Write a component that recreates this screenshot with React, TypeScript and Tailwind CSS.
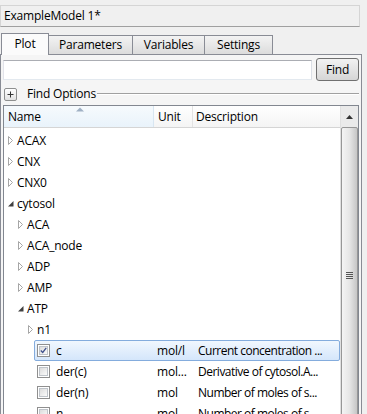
import React from 'react';

const FONT = { fontFamily: '"Open Sans", "Noto Sans", sans-serif' };

type Row = {
  label: string;
  level: number;
  kind: 'closed' | 'open' | 'leaf';
  checked?: boolean;
  unit?: string;
  desc?: string;
  selected?: boolean;
};

const ROWS: Row[] = [
  { label: 'ACAX', level: 0, kind: 'closed' },
  { label: 'CNX', level: 0, kind: 'closed' },
  { label: 'CNX0', level: 0, kind: 'closed' },
  { label: 'cytosol', level: 0, kind: 'open' },
  { label: 'ACA', level: 1, kind: 'closed' },
  { label: 'ACA_node', level: 1, kind: 'closed' },
  { label: 'ADP', level: 1, kind: 'closed' },
  { label: 'AMP', level: 1, kind: 'closed' },
  { label: 'ATP', level: 1, kind: 'open' },
  { label: 'n1', level: 2, kind: 'closed' },
  { label: 'c', level: 3, kind: 'leaf', checked: true, unit: 'mol/l', desc: 'Current concentration ...', selected: true },
  { label: 'der(c)', level: 3, kind: 'leaf', unit: 'mol...', desc: 'Derivative of cytosol.A...' },
  { label: 'der(n)', level: 3, kind: 'leaf', unit: 'mol', desc: 'Number of moles of s...' },
  { label: 'n', level: 3, kind: 'leaf', unit: 'mol', desc: 'Number of moles of s...' },
];

function ClosedArrow() {
  return (
    <svg width="6" height="10" viewBox="0 0 6 10" className="shrink-0">
      <path d="M0.5 0.5 L4.5 4.5 L0.5 8.5 Z" fill="white" stroke="#a6a6a6" strokeWidth="1" />
    </svg>
  );
}

function OpenArrow() {
  return (
    <svg width="6" height="10" viewBox="0 0 6 10" className="shrink-0">
      <path d="M5.5 2 L5.5 7.5 L0 7.5 Z" fill="#404040" />
    </svg>
  );
}

function CheckBox({ checked }: { checked?: boolean }) {
  return (
    <div className="w-[13px] h-[13px] border border-[#8f8f8f] bg-white p-[1px] shrink-0">
      <div className="w-full h-full border border-[#bfc4ca] bg-gradient-to-br from-[#dcdcdc] to-[#fbfbfb] flex items-center justify-center">
        {checked && (
          <svg width="9" height="9" viewBox="0 0 9 9">
            <path d="M1 4.5 L3.5 7 L8 1" fill="none" stroke="#3d4f8c" strokeWidth="1.6" />
          </svg>
        )}
      </div>
    </div>
  );
}

function TreeRow({ row }: { row: Row }) {
  const indent = row.level * 10;
  return (
    <div className="h-[21px] flex items-center relative">
      {row.selected && (
        <div
          className="absolute top-0 bottom-0 right-0 rounded-[2px] border border-[#84acdd] bg-gradient-to-b from-[#f1f7fe] to-[#d4e6fb]"
          style={{ left: 30 }}
        />
      )}
      <div className="w-[150px] shrink-0 flex items-center relative" style={{ paddingLeft: indent }}>
        {row.kind === 'leaf' ? (
          <>
            <div className="w-[3px]" />
            <CheckBox checked={row.checked} />
            <span className="ml-[6px] whitespace-nowrap">{row.label}</span>
          </>
        ) : (
          <>
            <div className="w-[4px]" />
            {row.kind === 'closed' ? <ClosedArrow /> : <OpenArrow />}
            <span className="ml-[3px] whitespace-nowrap">{row.label}</span>
          </>
        )}
      </div>
      <div className="w-[39px] shrink-0 pl-[3px] whitespace-nowrap relative">{row.unit}</div>
      <div className="flex-1 min-w-0 pl-[5px] whitespace-nowrap relative tracking-[-0.5px]">{row.desc}</div>
    </div>
  );
}

export default function App() {
  return (
    <div className="w-[367px] h-[414px] bg-[#f0f0f0] overflow-hidden text-[12px] text-black leading-none tracking-[-0.2px]" style={FONT}>
      {/* title */}
      <div className="mt-[5px] w-[360px] h-[22px] border border-[#d5d5d5] border-b-[#a0a0a0] flex items-center pl-[3px]">
        ExampleModel 1*
      </div>

      {/* tabs */}
      <div className="mt-[6px] flex items-end h-[22px] pl-[1px] relative z-10">
        <div className="w-[48px] h-[22px] border border-[#898c95] border-b-0 bg-[#fbfbfb] flex items-center justify-center pb-[1px]">
          Plot
        </div>
        <div className="w-[85px] h-[20px] -ml-[1px] border border-[#898c95] bg-gradient-to-b from-[#f3f3f3] to-[#dcdcdc] flex items-center justify-center">
          Parameters
        </div>
        <div className="w-[73px] h-[20px] -ml-[1px] border border-[#898c95] bg-gradient-to-b from-[#f3f3f3] to-[#dcdcdc] flex items-center justify-center">
          Variables
        </div>
        <div className="w-[69px] h-[20px] -ml-[1px] border border-[#898c95] bg-gradient-to-b from-[#f3f3f3] to-[#dcdcdc] flex items-center justify-center">
          Settings
        </div>
      </div>

      {/* panel */}
      <div className="-mt-[1px] w-[362px] h-[400px] border border-[#898c95] bg-[#f5f5f5] pt-[3px] px-[2px]">
        <div className="flex items-center gap-[4px]">
          <div className="w-[310px] h-[20px] border border-[#abadb3] border-l-[#e2e3ea] border-r-[#dbdfe6] border-b-[#e3e9ef] bg-white mt-[1px]" />
          <div className="w-[43px] h-[23px] rounded-[3px] border border-[#707070] bg-gradient-to-b from-[#f2f2f2] to-[#d6d6d6] flex items-center justify-center">
            Find
          </div>
        </div>

        <div className="h-[22px] mt-[2px] flex items-center">
          <div className="w-[13px] h-[13px] ml-[1px] border border-[#8e8f8f] rounded-[2px] bg-gradient-to-b from-white to-[#e2e2e2] flex items-center justify-center">
            <svg width="7" height="7" viewBox="0 0 7 7">
              <path d="M0.5 3.5 H6.5 M3.5 0.5 V6.5" stroke="#333" strokeWidth="1" />
            </svg>
          </div>
          <span className="ml-[10px] whitespace-nowrap">Find Options</span>
          <div className="flex-1 ml-[1px] h-[2px] border-t border-[#a0a0a0] border-b border-b-white" />
        </div>

        {/* tree */}
        <div className="h-[320px] border border-[#828790] bg-white flex">
          <div className="flex-1 min-w-0 flex flex-col">
            <div className="h-[24px] flex items-stretch border-b border-[#d5d5d5]">
              <div className="w-[150px] relative flex items-center pl-[4px] bg-gradient-to-b from-[#f6fafd] to-[#e9f3fb] border-r border-[#d8e6f2]">
                Name
                <svg className="absolute left-[72px] top-[1px]" width="8" height="5" viewBox="0 0 8 5">
                  <path d="M0 4.5 L4 0.5 L8 4.5 Z" fill="#9fb0c4" />
                </svg>
              </div>
              <div className="w-[39px] flex items-center pl-[4px] bg-gradient-to-b from-white to-[#f4f4f4] border-r border-[#e3e3e3]">Unit</div>
              <div className="flex-1 flex items-center pl-[3px] bg-gradient-to-b from-white to-[#f4f4f4]">Description</div>
            </div>
            <div className="pt-[2px]">
              {ROWS.map((r) => (
                <TreeRow key={r.label + r.level} row={r} />
              ))}
            </div>
          </div>
          {/* scrollbar */}
          <div className="w-[18px] shrink-0 bg-[#eaeaea] border-l border-[#e0e0e0] flex flex-col items-center">
            <div className="h-[21px] w-full flex items-center justify-center">
              <svg width="7" height="4" viewBox="0 0 7 4">
                <path d="M0 4 L3.5 0 L7 4 Z" fill="#333" />
              </svg>
            </div>
            <div className="flex-1 w-[17px] rounded-[2px] border border-[#979797] bg-gradient-to-r from-[#f4f4f4] via-[#e6e6e6] to-[#c6c6c6] flex items-center justify-center">
              <div className="flex flex-col gap-[1px]">
                <div className="w-[7px] h-[1px] bg-[#555]" />
                <div className="w-[7px] h-[1px] bg-[#555]" />
                <div className="w-[7px] h-[1px] bg-[#555]" />
                <div className="w-[7px] h-[1px] bg-[#555]" />
              </div>
            </div>
          </div>
        </div>
      </div>
    </div>
  );
}
